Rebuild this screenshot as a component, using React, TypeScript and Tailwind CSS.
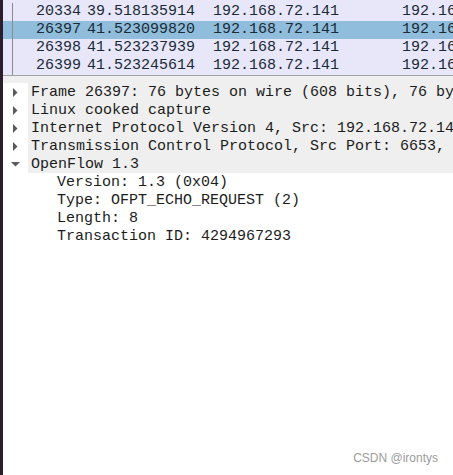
import React from "react";

const packets = [
  { no: "20334", time: "39.518135914", src: "192.168.72.141", dst: "192.168.72.142" },
  { no: "26397", time: "41.523099820", src: "192.168.72.141", dst: "192.168.72.142", selected: true },
  { no: "26398", time: "41.523237939", src: "192.168.72.141", dst: "192.168.72.142" },
  { no: "26399", time: "41.523245614", src: "192.168.72.141", dst: "192.168.72.142" },
];

const tree = [
  { text: "Frame 26397: 76 bytes on wire (608 bits), 76 bytes captured (608 bits)", open: false },
  { text: "Linux cooked capture", open: false },
  { text: "Internet Protocol Version 4, Src: 192.168.72.141, Dst: 192.168.72.142", open: false },
  { text: "Transmission Control Protocol, Src Port: 6653, Dst Port: 46580, Seq: 1", open: false },
  { text: "OpenFlow 1.3", open: true },
];

const children = [
  "Version: 1.3 (0x04)",
  "Type: OFPT_ECHO_REQUEST (2)",
  "Length: 8",
  "Transaction ID: 4294967293",
];

const Arrow = ({ open }: { open: boolean }) =>
  open ? (
    <svg width="9" height="5" viewBox="0 0 9 5" className="ml-[8px]">
      <polygon points="0,0 9,0 4.5,4.5" fill="#5a5a5a" />
    </svg>
  ) : (
    <svg width="5" height="9" viewBox="0 0 5 9" className="ml-[10px]">
      <polygon points="0,0 4.5,4.5 0,9" fill="#5a5a5a" />
    </svg>
  );

export default function App() {
  return (
    <div
      className="flex h-[475px] w-[453px] overflow-hidden bg-white text-[15px] leading-[18px]"
      style={{ fontFamily: '"Liberation Mono", monospace' }}
    >
      <div className="w-[3px] shrink-0 bg-[#2b1d2c]" />
      <div className="flex min-w-0 flex-1 flex-col">
        {/* packet list */}
        <div className="border-b border-[#a3a3a3] bg-[#e8e7fa] text-[#1b2a35]">
          {packets.map((p, i) => (
            <div
              key={p.no}
              className={`flex whitespace-nowrap ${i === 0 ? "h-[21px] pt-[3px]" : "h-[18px]"} ${p.selected ? "bg-[#8fbddb]" : ""}`}
            >
              <div className="w-[9px] shrink-0" />
              <div className="flex flex-1 border-l border-[#8c8c8c]">
                <div className="w-[68px] shrink-0 text-right">{p.no}</div>
                <div className="ml-[6px] w-[126px] shrink-0">{p.time}</div>
                <div className="w-[189px] shrink-0">{p.src}</div>
                <div className="shrink-0">{p.dst}</div>
              </div>
            </div>
          ))}
        </div>
        <div className="h-[7px] bg-[#efefef]" />

        {/* packet details */}
        <div className="text-[#1c1c1c]">
          {tree.map((t) => (
            <div key={t.text} className="flex h-[18px] whitespace-nowrap">
              <div className="flex w-[25px] shrink-0 items-center">
                <Arrow open={t.open} />
              </div>
              <div className="flex-1 bg-[#efefef] pl-[3px] leading-[20px]">{t.text}</div>
            </div>
          ))}
          {children.map((c) => (
            <div key={c} className="h-[18px] whitespace-nowrap pl-[54px] leading-[20px]">
              {c}
            </div>
          ))}
        </div>

        <div className="flex flex-1 items-end justify-end pb-[10px] pr-[15px]">
          <span
            className="text-[12px] leading-[14px] text-[#9c9c9c]"
            style={{ fontFamily: '"Liberation Sans", sans-serif' }}
          >
            CSDN @irontys
          </span>
        </div>
      </div>
    </div>
  );
}
